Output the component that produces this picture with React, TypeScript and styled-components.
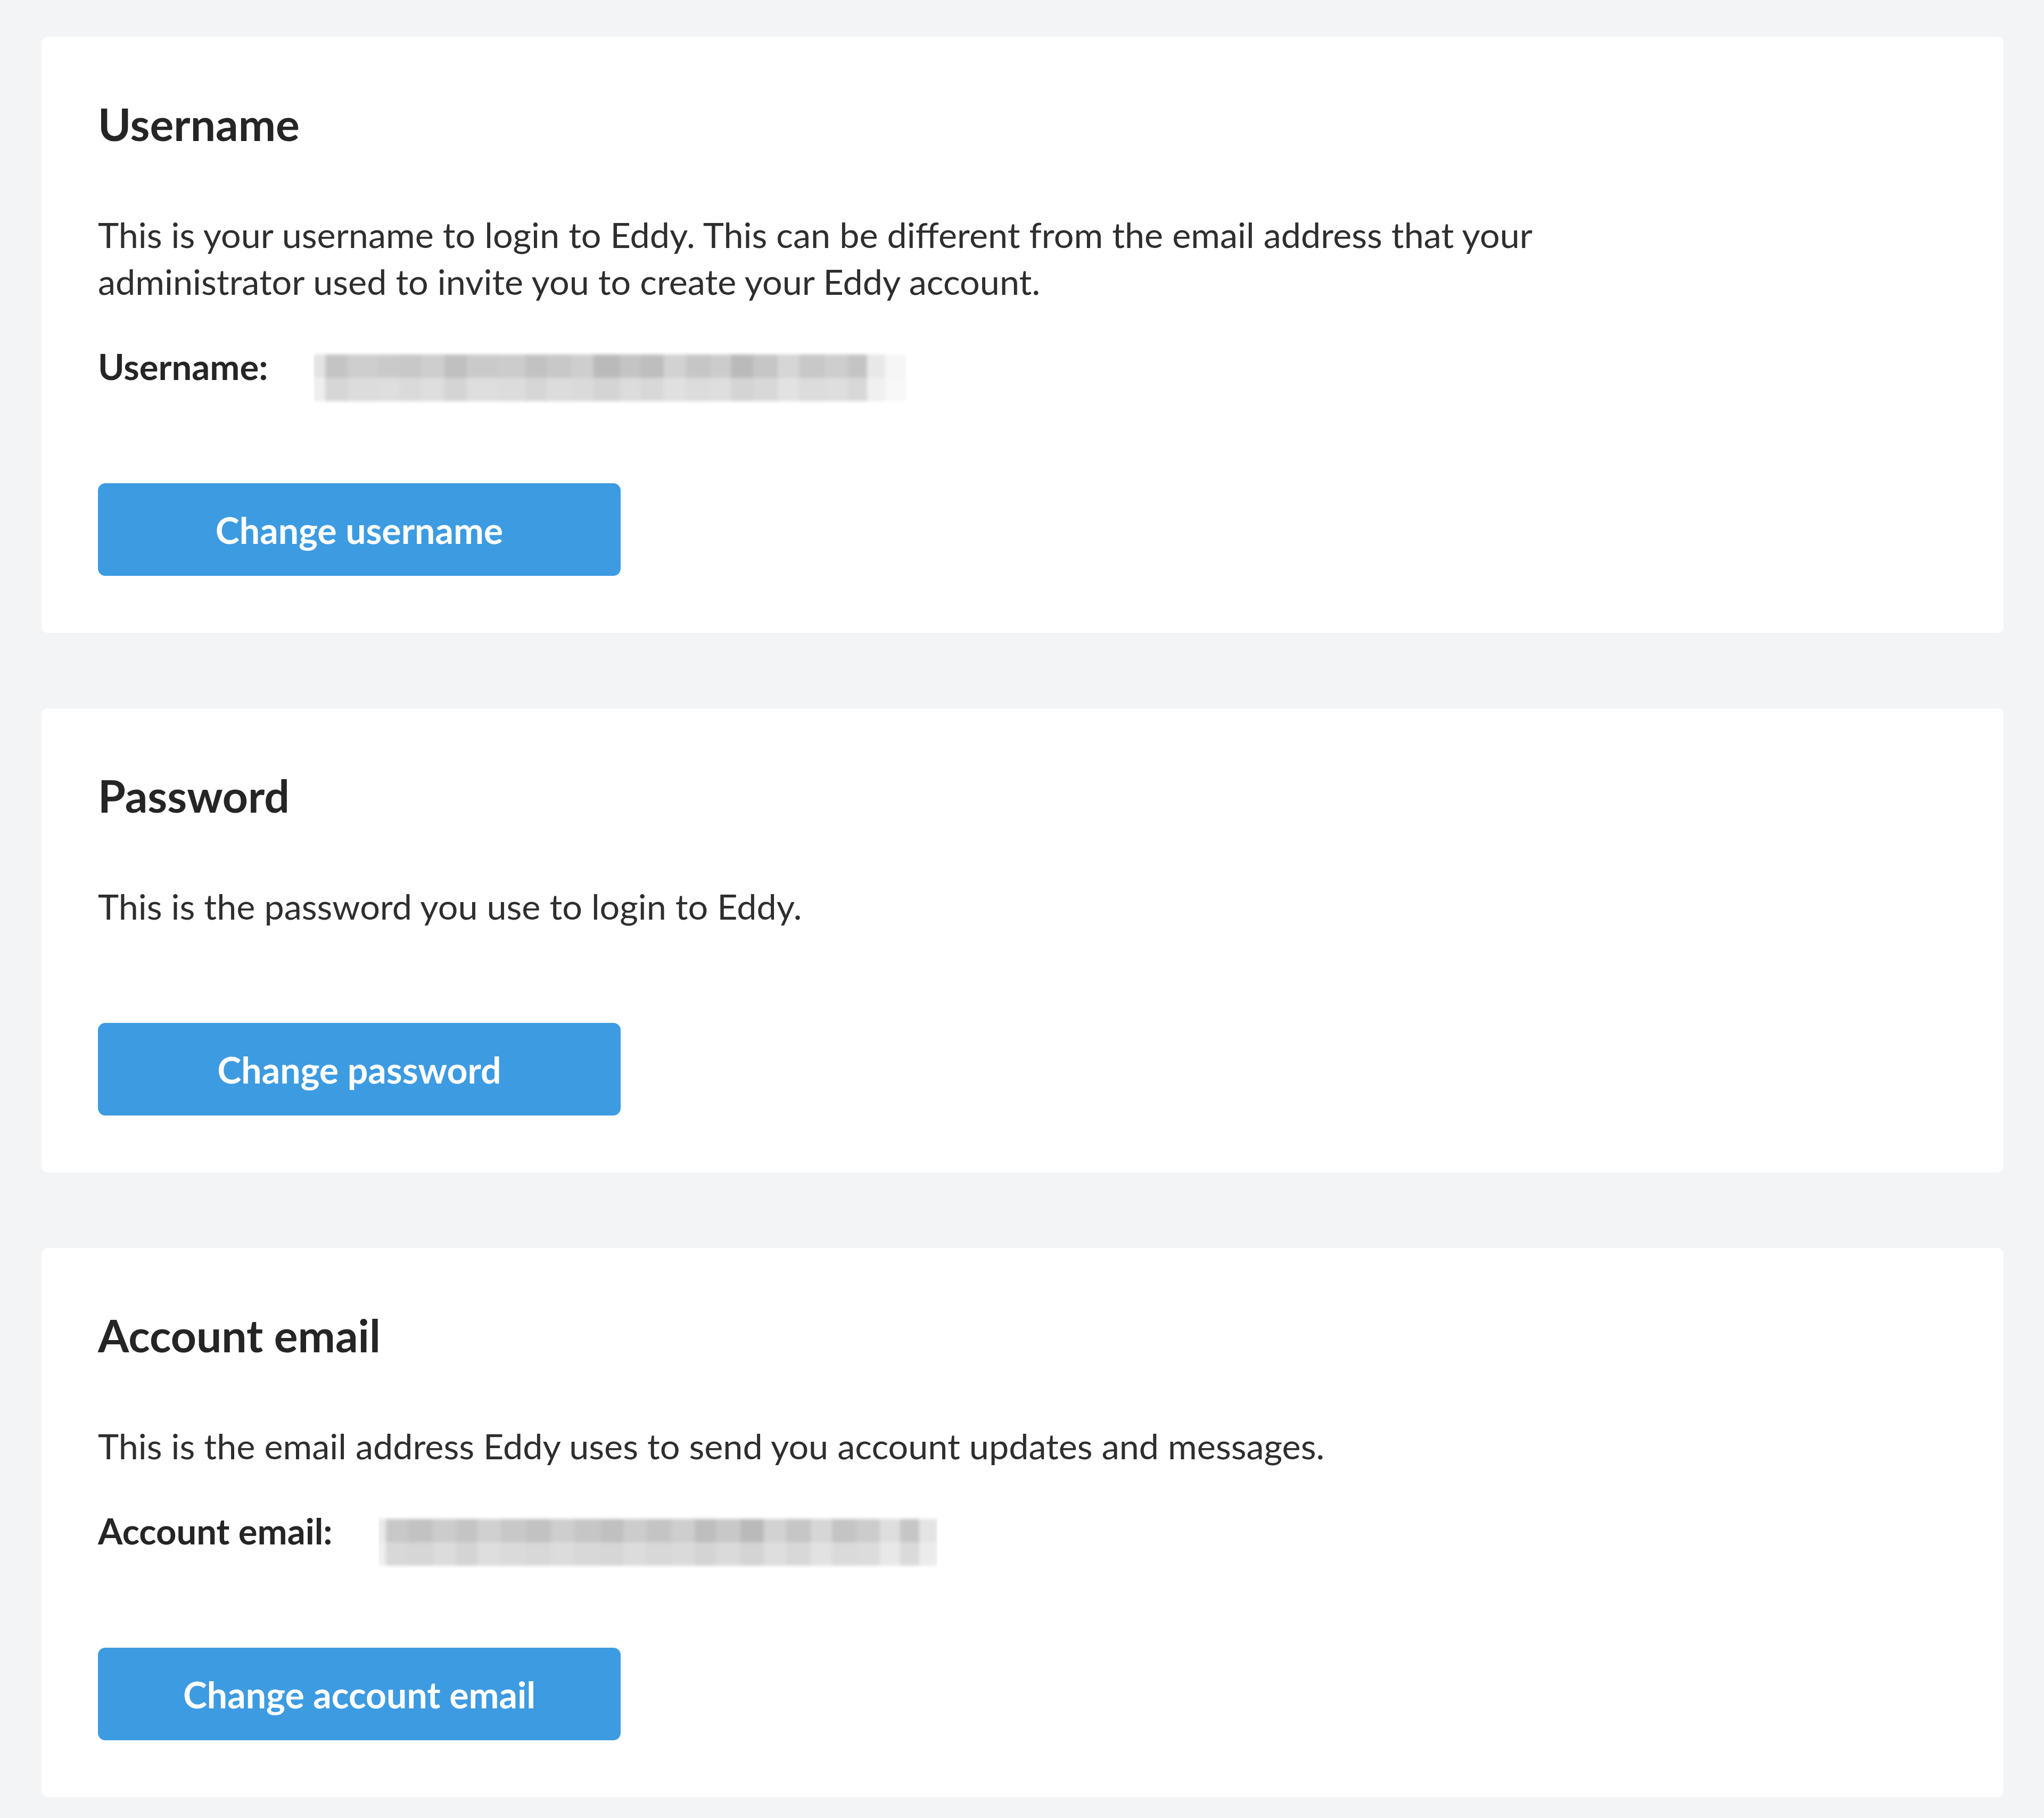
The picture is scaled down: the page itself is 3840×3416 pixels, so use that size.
import styled, { createGlobalStyle } from "styled-components";

const GlobalStyle = createGlobalStyle`
  html, body {
    margin: 0;
    padding: 0;
    background: #f3f4f6;
  }
  body {
    font-family: "Lato", "Noto Sans", sans-serif;
    color: #2b2b2b;
  }
`;

const Page = styled.main`
  display: flex;
  flex-direction: column;
  gap: 142px;
  padding: 69px 76px 41px 78px;
`;

const Card = styled.section`
  background: #ffffff;
  border-radius: 12px;
  padding: 106px 106px 107px;
  display: flex;
  flex-direction: column;
  align-items: flex-start;
`;

const Title = styled.h2`
  margin: 0;
  font-size: 84px;
  line-height: 116px;
  font-weight: 700;
  color: #252525;
`;

const Description = styled.p`
  margin: 105px 0 0;
  max-width: 2760px;
  font-size: 66.5px;
  line-height: 88px;
  font-weight: 400;
  color: #2e2e2e;
`;

const Field = styled.div`
  margin-top: 72px;
  height: 88px;
  display: flex;
  align-items: center;
  gap: 86px;
`;

const FieldLabel = styled.span`
  font-size: 67px;
  font-weight: 700;
  color: #252525;
`;

const Redacted = styled.svg`
  display: block;
  margin-top: 44px;
`;

const ActionButton = styled.button`
  margin-top: 176px;
  width: 982px;
  height: 174px;
  border: none;
  border-radius: 14px;
  background: #3d9be1;
  color: #ffffff;
  font-family: inherit;
  font-size: 68px;
  font-weight: 700;
  cursor: pointer;
`;

// greyscale cells of a pixelated value, [width, top shade, bottom shade]
type Cell = [number, number, number];

const userCells: Cell[] = [
  [22, 228, 238], [42, 196, 214], [56, 206, 220], [42, 202, 222], [40, 200, 218],
  [44, 206, 222], [42, 192, 212], [58, 202, 222], [52, 204, 220], [40, 194, 214],
  [46, 200, 220], [42, 206, 218], [50, 186, 212], [38, 196, 220], [44, 190, 216],
  [42, 210, 224], [46, 198, 220], [38, 204, 222], [42, 186, 212], [46, 198, 216],
  [40, 214, 226], [48, 200, 220], [44, 206, 222], [36, 196, 216], [34, 232, 240],
  [40, 246, 248],
];

const emailCells: Cell[] = [
  [14, 232, 238], [42, 200, 216], [46, 194, 214], [44, 204, 220], [40, 196, 212],
  [44, 208, 222], [48, 200, 218], [46, 194, 216], [44, 206, 220], [50, 198, 216],
  [42, 192, 214], [44, 204, 220], [46, 196, 216], [44, 206, 218], [40, 190, 212],
  [46, 200, 218], [44, 186, 212], [42, 210, 222], [46, 198, 216], [40, 214, 226],
  [46, 196, 218], [44, 204, 220], [38, 222, 232], [36, 198, 218], [34, 228, 236],
];

function Mosaic({ cells }: { cells: Cell[] }) {
  const width = cells.reduce((sum, c) => sum + c[0], 0);
  let x = 0;
  return (
    <Redacted width={width} height={100} viewBox={`0 0 ${width} 100`}>
      <defs>
        <filter id="soften" x="-5%" y="-20%" width="110%" height="140%">
          <feGaussianBlur stdDeviation="3" />
        </filter>
      </defs>
      <g filter="url(#soften)">
        {cells.map(([w, top, bottom], i) => {
          const left = x;
          x += w;
          return (
            <g key={i}>
              <rect x={left} y={6} width={w} height={44} fill={`rgb(${top},${top},${top})`} />
              <rect x={left} y={50} width={w} height={44} fill={`rgb(${bottom},${bottom},${bottom})`} />
            </g>
          );
        })}
      </g>
    </Redacted>
  );
}

export default function App() {
  return (
    <>
      <GlobalStyle />
      <Page>
        <Card>
          <Title>Username</Title>
          <Description>
            This is your username to login to Eddy. This can be different from the email address that your
            administrator used to invite you to create your Eddy account.
          </Description>
          <Field>
            <FieldLabel>Username:</FieldLabel>
            <Mosaic cells={userCells} />
          </Field>
          <ActionButton>Change username</ActionButton>
        </Card>

        <Card>
          <Title>Password</Title>
          <Description>This is the password you use to login to Eddy.</Description>
          <ActionButton>Change password</ActionButton>
        </Card>

        <Card>
          <Title>Account email</Title>
          <Description>This is the email address Eddy uses to send you account updates and messages.</Description>
          <Field>
            <FieldLabel>Account email:</FieldLabel>
            <Mosaic cells={emailCells} />
          </Field>
          <ActionButton>Change account email</ActionButton>
        </Card>
      </Page>
    </>
  );
}
